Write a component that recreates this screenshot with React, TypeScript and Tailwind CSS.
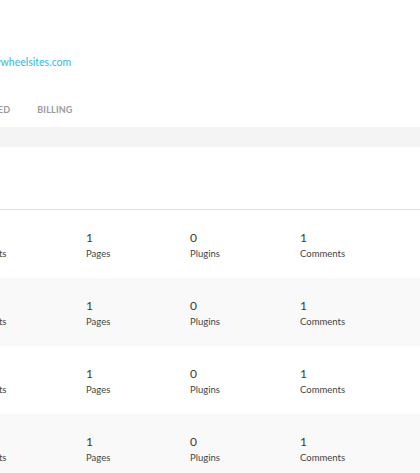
import React from "react";

const rows = [0, 1, 2, 3];

function StatCell({ value, label, className }: { value: string; label: string; className: string }) {
  return (
    <div className={className}>
      <div className="text-[12px] leading-[14px] text-[#3a3a3a]">{value}</div>
      <div className="mt-[3px] text-[9.5px] leading-[11px] text-[#444]">{label}</div>
    </div>
  );
}

export default function App() {
  return (
    <div className="h-[473px] w-[420px] overflow-hidden bg-white font-['Lato','Open_Sans',sans-serif]">
      {/* site header */}
      <div className="h-[127px]">
        <div className="pt-[55px] -ml-[11px] text-[10.5px] leading-[14px] text-[#34b8de]">
          flywheelsites.com
        </div>
        <div className="mt-[35px] -ml-[41px] flex gap-[27px] text-[9px] font-bold leading-[12px] tracking-[0.02em] text-[#9a9a9a]">
          <span>ADVANCED</span>
          <span>BILLING</span>
        </div>
      </div>

      <div className="h-[20px] bg-[#f4f4f4]" />
      <div className="h-[63px] border-b border-[#e3e3e3] bg-white" />

      {rows.map((r) => (
        <div
          key={r}
          className={`flex h-[68px] items-start pt-[21px] ${r % 2 === 1 ? "bg-[#f9f9f9]" : "bg-white"}`}
        >
          <StatCell value="1" label="Posts" className="-ml-[16px] w-[102px]" />
          <StatCell value="1" label="Pages" className="w-[104px]" />
          <StatCell value="0" label="Plugins" className="w-[110px]" />
          <StatCell value="1" label="Comments" className="w-[100px]" />
        </div>
      ))}
    </div>
  );
}
